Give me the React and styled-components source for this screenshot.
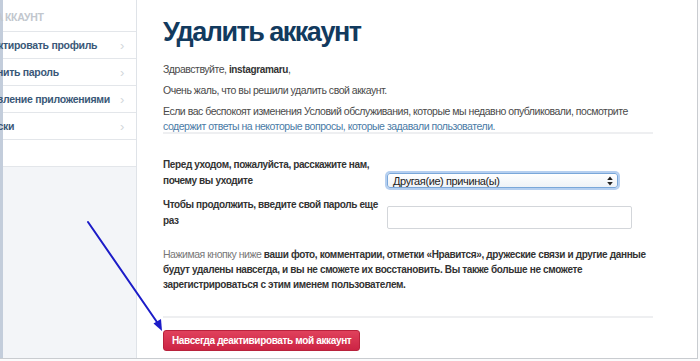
import React from "react";
import styled, { createGlobalStyle } from "styled-components";

const Global = createGlobalStyle`
  html, body { margin: 0; padding: 0; background: #fff; }
  body { font-family: "Liberation Sans", Arial, sans-serif; overflow: hidden; }
  * { box-sizing: border-box; }
`;

const Page = styled.div`
  position: relative;
  width: 700px;
  height: 361px;
  background: #fbfbfc;
`;

const Frame = styled.div`
  display: flex;
  width: 698px;
  height: 359px;
  border-bottom: 1px solid #c9ccd0;
  border-right: 1px solid #c9ccd0;
  overflow: hidden;
`;

const Sidebar = styled.nav`
  width: 137px;
  flex: none;
  background: #f3f5f8;
  border-left: 3px solid #c3cddb;
  border-right: 1px solid #dfe3e8;
`;

const NavRow = styled.div`
  display: flex;
  align-items: center;
  height: ${(p) => (p.$head ? 32 : 27)}px;
  padding: 0 12px 0 0;
  background: #fff;
  border-bottom: 1px solid #e3e6ea;
  font-size: 10.5px;
  letter-spacing: -0.3px;
  font-weight: bold;
  white-space: nowrap;
  color: ${(p) => (p.$head ? "#c2c7ce" : "#3a5878")};
  padding-top: ${(p) => (p.$head ? 2 : 0)}px;
`;

const Clipped = styled.span`
  display: flex;
  justify-content: flex-end;
  width: 0;
  overflow: visible;
`;

const NavLabel = styled.span`
  flex: 1;
`;

const Chevron = styled.span`
  color: #d3d7dc;
  font-size: 13px;
  font-weight: normal;
`;

const Main = styled.main`
  flex: 1;
  background: #fff;
  padding: 14px 44px 0 26px;
  color: #4a4a4a;
  font-size: 10.5px;
  letter-spacing: -0.47px;
`;

const Title = styled.h1`
  margin: 0 0 12px;
  font-size: 27px;
  line-height: 36px;
  font-weight: bold;
  color: #123a5e;
  letter-spacing: -1.5px;
`;

const P = styled.p`
  margin: 0 0 ${(p) => p.$mb ?? 6}px;
  line-height: ${(p) => p.$lh ?? 15}px;
  color: ${(p) => p.$color ?? "#4a4a4a"};
`;

const Link = styled.a`
  color: #4a7ba6;
  text-decoration: none;
`;

const Strong = styled.b`
  color: #333;
  font-size: 10px;
  letter-spacing: -0.35px;
`;

const Rule = styled.hr`
  margin: ${(p) => p.$m};
  border: none;
  border-top: 2px solid #eeeff1;
`;

const Form = styled.div`
  display: grid;
  grid-template-columns: 224px 1fr;
  row-gap: 8px;
`;

const Label = styled.div`
  font-weight: bold;
  font-size: 10px;
  letter-spacing: -0.38px;
  color: #333;
  line-height: 16px;
  padding-right: 3px;
`;

const SelectBox = styled.div`
  align-self: end;
  display: flex;
  align-items: center;
  justify-content: space-between;
  width: 231px;
  height: 15px;
  margin-bottom: 1px;
  padding: 0 4px 0 5px;
  border: 1px solid #7aa7d9;
  border-radius: 3px;
  background: linear-gradient(#ffffff, #eef2f7);
  box-shadow: 0 0 0 2px #b5cff0;
  color: #222;
  font-size: 11px;
  letter-spacing: -0.4px;
`;

const TextInput = styled.div`
  margin-top: 9px;
  width: 245px;
  height: 23px;
  border: 1px solid #d3d6da;
  border-radius: 2px;
  background: #fff;
`;

const Button = styled.button`
  display: block;
  height: 21px;
  padding: 0 8px;
  border: 1px solid #b8223c;
  border-radius: 3px;
  background: linear-gradient(#e0415c, #cc2444);
  color: #fff;
  font-family: "Liberation Sans", Arial, sans-serif;
  font-size: 10px;
  letter-spacing: -0.35px;
  font-weight: bold;
  cursor: pointer;
`;

const Arrow = styled.svg`
  position: absolute;
  left: 0;
  top: 0;
  pointer-events: none;
`;

const nav = [
  ["Редак", "тировать профиль"],
  ["Смен", "ить пароль"],
  ["Управ", "ление приложениями"],
  ["Подпис", "ки"],
];

export default function App() {
  return (
    <Page>
      <Global />
      <Frame>
        <Sidebar>
          <NavRow $head>
            <Clipped>А</Clipped>
            <NavLabel style={{ marginLeft: 2 }}>ККАУНТ</NavLabel>
          </NavRow>
          {nav.map(([a, b]) => (
            <NavRow key={b}>
              <Clipped>{a}</Clipped>
              <NavLabel>{b}</NavLabel>
              <Chevron>›</Chevron>
            </NavRow>
          ))}
          <NavRow />
        </Sidebar>
        <Main>
          <Title>Удалить аккаунт</Title>
          <P>
            Здравствуйте, <Strong>instagramaru</Strong>,
          </P>
          <P>Очень жаль, что вы решили удалить свой аккаунт.</P>
          <P $mb={0}>
            Если вас беспокоят изменения Условий обслуживания, которые мы недавно опубликовали, посмотрите{" "}
            <Link>содержит ответы на некоторые вопросы, которые задавали пользователи.</Link>
          </P>
          <Rule $m="-2px 0 23px" />
          <Form>
            <Label>Перед уходом, пожалуйста, расскажите нам, почему вы уходите</Label>
            <SelectBox>
              <span>Другая(ие) причина(ы)</span>
              <svg width="6" height="10" viewBox="0 0 6 10">
                <path d="M3 0.5 L5.8 4 L0.2 4 Z M3 9.5 L5.8 6 L0.2 6 Z" fill="#222" />
              </svg>
            </SelectBox>
            <Label>Чтобы продолжить, введите свой пароль еще раз</Label>
            <TextInput />
          </Form>
          <P $mb={0} style={{ marginTop: 18 }} $color="#777">
            Нажимая кнопку ниже{" "}
            <Strong>
              ваши фото, комментарии, отметки «Нравится», дружеские связи и другие данные будут удалены навсегда, и вы не сможете их восстановить. Вы также больше не сможете зарегистрироваться с этим именем пользователем.
            </Strong>
          </P>
          <Rule $m="24px 0 12px" />
          <Button>Навсегда деактивировать мой аккаунт</Button>
        </Main>
      </Frame>
      <Arrow width="700" height="361" viewBox="0 0 700 361">
        <line x1="88" y1="222" x2="159" y2="325" stroke="#1c1cc8" strokeWidth="2" strokeLinecap="round" />
        <path d="M162 331 L153.5 323.5 L161 319 Z" fill="#1c1cc8" />
      </Arrow>
    </Page>
  );
}
